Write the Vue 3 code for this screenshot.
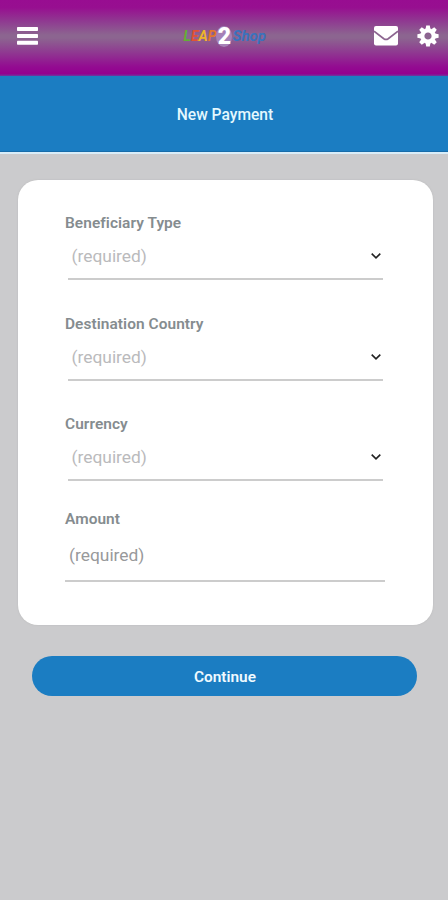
<script setup>
const fields = [
  { label: 'Beneficiary Type', select: true },
  { label: 'Destination Country', select: true },
  { label: 'Currency', select: true },
  { label: 'Amount', select: false }
]
const teeth = [0, 45, 90, 135, 180, 225, 270, 315]
</script>

<template>
  <div class="screen">
    <header class="topbar">
      <button class="icon-btn" aria-label="Menu">
        <svg width="21" height="18" viewBox="0 0 21 18" fill="#fff">
          <rect y="0" width="21" height="4" rx=".7" />
          <rect y="6.9" width="21" height="4" rx=".7" />
          <rect y="13.8" width="21" height="4" rx=".7" />
        </svg>
      </button>
      <div class="logo">
        <span class="leap"><i class="l">L</i><i class="e">E</i><i class="a">A</i><i class="p">P</i></span>
        <span class="two">2</span>
        <span class="shop">Shop</span>
      </div>
      <div class="actions">
        <button class="icon-btn" aria-label="Messages">
          <svg width="24" height="20" viewBox="0 0 24 20">
            <rect width="24" height="19.5" rx="2" fill="#fff" />
            <path d="M0 5.3 L9.8 12.7 Q12 14.2 14.2 12.7 L24 5.3" fill="none" stroke="#8c6590" stroke-width="1.7" />
          </svg>
        </button>
        <button class="icon-btn" aria-label="Settings">
          <svg width="22" height="22" viewBox="-11 -11 22 22">
            <circle r="5.7" fill="none" stroke="#fff" stroke-width="4.2" />
            <path v-for="t in teeth" :key="t" :transform="`rotate(${t})`" d="M-2.4 -7 L-1.8 -10.6 H1.8 L2.4 -7 Z" fill="#fff" />
          </svg>
        </button>
      </div>
    </header>

    <div class="title"><h1>New Payment</h1></div>

    <main>
      <form class="card">
        <div v-for="f in fields" :key="f.label" class="field" :class="{ entry: !f.select }">
          <label>{{ f.label }}</label>
          <div class="control">
            <span>(required)</span>
            <svg v-if="f.select" width="12" height="8" viewBox="0 0 12 8">
              <path d="M1.7 1.6 L6 5.9 L10.3 1.6" fill="none" stroke="#222" stroke-width="1.6" />
            </svg>
          </div>
        </div>
      </form>
      <button class="continue">Continue</button>
    </main>
  </div>
</template>

<style>
body { background: #cbcbcd; }
</style>

<style scoped>
.screen {
  min-height: 900px;
  background: #cbcbcd;
  font-family: Roboto, sans-serif;
}
button { border: 0; padding: 0; background: none; font-family: inherit; }
svg { display: block; }
.topbar {
  box-sizing: border-box;
  height: 76px;
  padding: 0 9px 4px 16.5px;
  display: grid;
  grid-template-columns: 65px 1fr 65px;
  align-items: center;
  background: linear-gradient(#980d91 0, #970f90 10%, #8f3c91 29%, #8c6590 46%, #8c6590 50%, #8f3b91 68%, #930b91 88%, #93008f 97%, #6a3a9e 100%);
}
.logo {
  display: flex;
  align-items: center;
  justify-content: center;
  height: 24px;
  padding-right: 6px;
}
.leap { font-size: 14px; font-style: italic; }
.leap i { font-weight: 700; }
.l { color: #63ae35; }
.e { color: #e25135; }
.a { color: #ecb52a; }
.p { color: #e2752f; }
.two {
  width: 16px;
  font-size: 23px;
  line-height: 21px;
  font-weight: 900;
  text-align: center;
  color: #fff;
  border-radius: 50%;
  background: #a681b7;
}
.shop { font-size: 15px; font-weight: 700; font-style: italic; color: #3a72bd; }
.actions { display: flex; justify-content: space-between; align-items: center; }
.title {
  box-sizing: border-box;
  height: 78px;
  display: flex;
  align-items: center;
  justify-content: center;
  background: #1b7dc2;
  border-bottom: 2px solid #d9edf8;
  box-shadow: inset 0 -1px #176caa;
}
h1 { margin: 0; padding: 1px 0 0 2px; font-size: 15.6px; font-weight: 500; color: #e4f8fe; }
main { padding: 26px 15.5px 0 17.5px; }
.card {
  box-sizing: border-box;
  height: 445px;
  padding: 33px 47.5px 0;
  border-radius: 20px;
  background: #fff;
  box-shadow: 0 0 2px #b8b8b9;
}
.field { height: 100.5px; }
label { display: block; line-height: 20px; font-size: 15.45px; letter-spacing: .06px; font-weight: 600; color: #858c8f; }
.control {
  box-sizing: border-box;
  height: 47px;
  margin: 0 2px 0 3px;
  padding: 1px 1.5px 0 3.5px;
  display: flex;
  align-items: center;
  justify-content: space-between;
  border-bottom: 2px solid #ccc;
  font-size: 17.4px;
  color: #bababc;
}
.entry { margin-top: -5.5px; }
.entry .control { height: 53px; margin: 0; padding: 1px 4px 0; color: #98999b; }
.continue {
  display: block;
  width: 385px;
  height: 40px;
  margin: 31px 0 0 14.5px;
  padding: 2px 0 0 1px;
  border-radius: 20px;
  background: #1b7dc2;
  color: #effaff;
  font-size: 15.4px;
  font-weight: 600;
}
</style>
